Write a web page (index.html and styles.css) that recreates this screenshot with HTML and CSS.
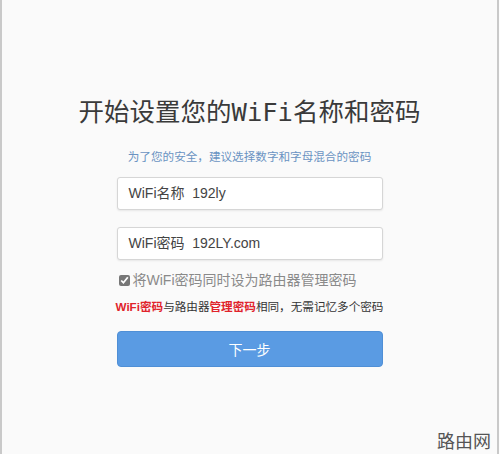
FILE: index.html
```html
<!DOCTYPE html>
<html lang="zh-CN">
<head>
  <meta charset="UTF-8" />
  <title>设置WiFi</title>
  <link rel="stylesheet" href="styles.css">
</head>
<body>
  <div class="page">
    <div class="setup">
      <h1 class="title">开始设置您的WiFi名称和密码</h1>
      <p class="hint">为了您的安全，建议选择数字和字母混合的密码</p>

      <div class="field">WiFi名称&nbsp;&nbsp;192ly</div>
      <div class="field">WiFi密码&nbsp;&nbsp;192LY.com</div>

      <label class="same">
        <input type="checkbox" checked>
        <span>将WiFi密码同时设为路由器管理密码</span>
      </label>

      <p class="note"><b>WiFi密码</b>与路由器<b>管理密码</b>相同，无需记忆多个密码</p>

      <button class="next">下一步</button>
    </div>
    <div class="brand">路由网</div>
  </div>
</body>
</html>
```

FILE: styles.css
```css
body {
  margin: 0;
  background: #fdfdfd;
  font-family: Arial, "Liberation Sans", "Noto Sans CJK SC", sans-serif;
}

.page {
  height: 454px;
  box-sizing: border-box;
  border-left: 2px solid #c9c9c9;
  border-right: 2px solid #c9c9c9;
  width: 499px;
  background: #fafafa;
  display: flex;
  flex-direction: column;
}

.setup {
  width: 266px;
  margin: 0 auto;
  padding-top: 95px;
  display: flex;
  flex-direction: column;
  align-items: center;
}

.title {
  margin: 0;
  white-space: nowrap;
  font-family: "DejaVu Sans Mono", "Noto Sans CJK SC", monospace;
  font-size: 25.5px;
  font-weight: normal;
  line-height: 34px;
  color: #3a3a3a;
}

.hint {
  margin: 20px 0 0;
  font-size: 11.6px;
  line-height: 16px;
  color: #6a93c2;
}

.field {
  align-self: stretch;
  margin-top: 12px;
  height: 33px;
  box-sizing: border-box;
  padding: 0 11px;
  border: 1px solid #d6d6d6;
  border-radius: 3px;
  background: #fff;
  box-shadow: 0 1px 2px rgba(0, 0, 0, 0.08);
  font-size: 14px;
  line-height: 31px;
  color: #444;
}

.field + .field {
  margin-top: 17px;
}

.same {
  align-self: stretch;
  margin-top: 11px;
  display: flex;
  align-items: center;
  gap: 3px;
  padding-left: 2px;
  font-size: 14px;
  line-height: 18px;
  color: #8a8a8a;
}

.same input {
  margin: 0;
  width: 11px;
  height: 11px;
  accent-color: #777;
}

.note {
  margin: 10px 0 0;
  white-space: nowrap;
  font-size: 11.6px;
  line-height: 16px;
  color: #333;
}

.note b {
  color: #e0232b;
}

.next {
  align-self: stretch;
  margin-top: 16px;
  height: 36px;
  border: 1px solid #4f8fd6;
  border-radius: 4px;
  background: #5a9be3;
  color: #fff;
  font-family: "Noto Sans CJK SC", sans-serif;
  font-size: 14px;
}

.brand {
  margin-top: auto;
  align-self: flex-end;
  padding: 0 6px 2px 0;
  font-family: "Noto Sans CJK SC", sans-serif;
  font-size: 18px;
  line-height: 24px;
  color: #555;
}
```
